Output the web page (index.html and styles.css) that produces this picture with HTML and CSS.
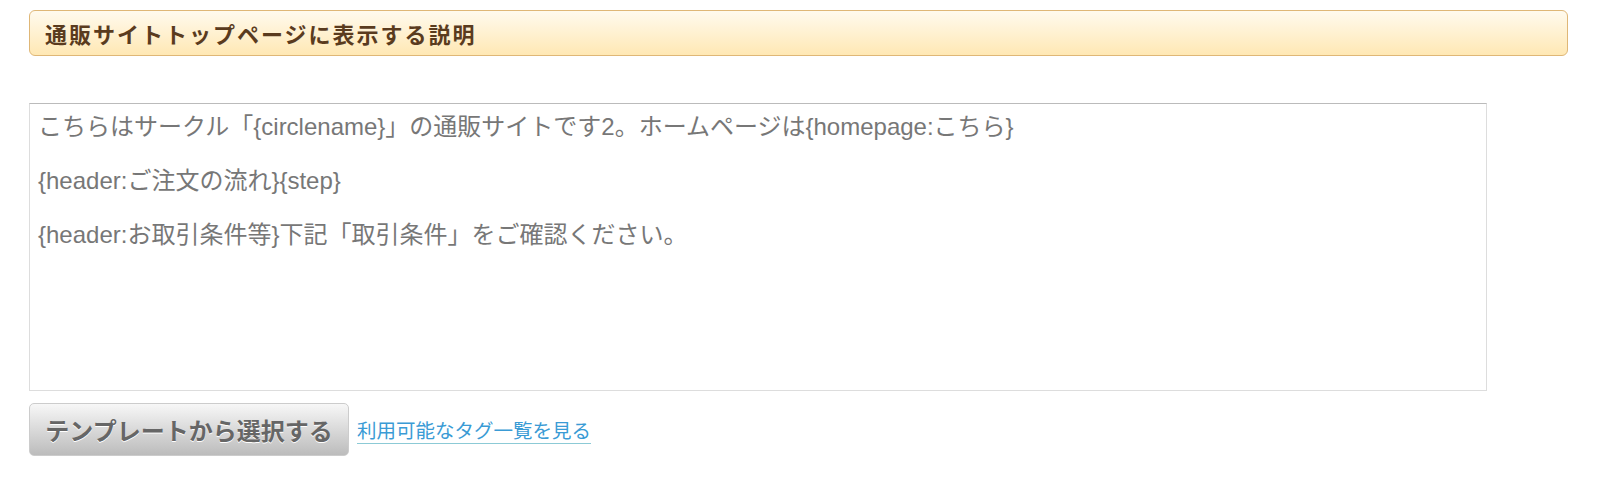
FILE: index.html
```html
<!DOCTYPE html>
<html lang="ja">
<head>
  <meta charset="UTF-8" />
  <title>通販サイトトップページに表示する説明</title>
  <link rel="stylesheet" href="styles.css">
</head>
<body>

  <div class="page">
    <h2 class="section-title">通販サイトトップページに表示する説明</h2>

    <textarea class="desc-input">こちらはサークル「{circlename}」の通販サイトです2。ホームページは{homepage:こちら}

{header:ご注文の流れ}{step}

{header:お取引条件等}下記「取引条件」をご確認ください。</textarea>

    <div class="actions">
      <button class="template-btn">テンプレートから選択する</button>
      <a href="#" class="tag-link">利用可能なタグ一覧を見る</a>
    </div>
  </div>

</body>
</html>
```

FILE: styles.css
```css
body {
  margin: 0;
  background-color: #ffffff;
  font-family: "Liberation Sans", "Noto Sans CJK JP", sans-serif;
}

.page {
  padding: 10px 54px 0 29px;
}

.section-title {
  margin: 0;
  height: 46px;
  box-sizing: border-box;
  padding: 0 15px;
  display: flex;
  align-items: center;
  font-size: 22px;
  font-weight: bold;
  letter-spacing: 2px;
  color: #5a3b1e;
  border: 1px solid #dfb777;
  border-radius: 6px;
  background: linear-gradient(to bottom, #fffaee 0%, #ffe8b4 100%);
}

.desc-input {
  display: block;
  margin-top: 47px;
  width: 1458px;
  height: 288px;
  box-sizing: border-box;
  padding: 9px 8px;
  font-family: "Liberation Sans", "Noto Sans CJK JP", sans-serif;
  font-size: 24px;
  line-height: 27px;
  color: #777777;
  border: 1px solid #dddddd;
  border-top-color: #bbbbbb;
  resize: none;
  outline: none;
}

.actions {
  margin-top: 12px;
  display: flex;
  align-items: center;
  gap: 8px;
}

.template-btn {
  width: 320px;
  height: 53px;
  padding: 0;
  font-family: "Liberation Sans", "Noto Sans CJK JP", sans-serif;
  font-size: 24px;
  font-weight: bold;
  color: #666666;
  text-shadow: 0 1px 0 #ffffff;
  border: 1px solid #cccccc;
  border-radius: 5px;
  background: linear-gradient(to bottom, #f7f7f7 0%, #bcbcbc 100%);
}

.tag-link {
  font-size: 19.5px;
  color: #3a9bd5;
  text-decoration: none;
  border-bottom: 1px solid #8ccad6;
  line-height: 24px;
  margin-top: 4px;
}
```
